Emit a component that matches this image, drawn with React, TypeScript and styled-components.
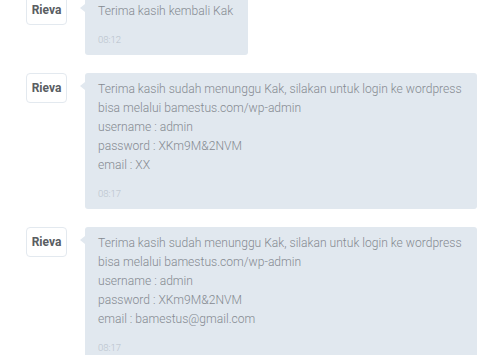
import React from "react";
import styled, { createGlobalStyle } from "styled-components";

const Global = createGlobalStyle`
  html, body { margin: 0; padding: 0; background: #ffffff; }
  body { font-family: Roboto, "Liberation Sans", sans-serif; overflow: hidden; }
`;

const Thread = styled.div`
  display: flex;
  flex-direction: column;
  gap: 18px;
  padding-left: 26px;
  margin-top: -5px;
`;

const Row = styled.div`
  display: flex;
  align-items: flex-start;
  gap: 18px;
`;

const Avatar = styled.div`
  box-sizing: border-box;
  width: 41px;
  height: 30px;
  flex: none;
  display: flex;
  align-items: center;
  justify-content: center;
  background: #fff;
  border: 1px solid #e3e9ef;
  border-radius: 4px;
  font-size: 12px;
  font-weight: 700;
  color: #595d62;
`;

const Bubble = styled.div`
  position: relative;
  box-sizing: border-box;
  background: #e1e8ef;
  border-radius: 3px;
  padding: 7px 15px 8px 13px;
  &::before {
    content: "";
    position: absolute;
    left: -5px;
    top: 9px;
    border-style: solid;
    border-width: 4px 5px 4px 0;
    border-color: transparent #e1e8ef transparent transparent;
  }
`;

const Text = styled.div`
  font-size: 12.1px;
  line-height: 19px;
  font-weight: 300;
  color: #858a91;
  white-space: pre;
`;

const Time = styled.div`
  margin-top: 12px;
  font-size: 9.5px;
  line-height: 14px;
  font-weight: 300;
  color: #b7c1cb;
`;

const messages = [
  { text: "Terima kasih kembali Kak", time: "08:12" },
  {
    text:
      "Terima kasih sudah menunggu Kak, silakan untuk login ke wordpress\nbisa melalui bamestus.com/wp-admin\nusername : admin\npassword : XKm9M&2NVM\nemail : XX",
    time: "08:17",
  },
  {
    text:
      "Terima kasih sudah menunggu Kak, silakan untuk login ke wordpress\nbisa melalui bamestus.com/wp-admin\nusername : admin\npassword : XKm9M&2NVM\nemail : bamestus@gmail.com",
    time: "08:17",
  },
];

export default function App() {
  return (
    <>
      <Global />
      <Thread>
        {messages.map((m, i) => (
          <Row key={i}>
            <Avatar>Rieva</Avatar>
            <Bubble>
              <Text>{m.text}</Text>
              <Time>{m.time}</Time>
            </Bubble>
          </Row>
        ))}
      </Thread>
    </>
  );
}
